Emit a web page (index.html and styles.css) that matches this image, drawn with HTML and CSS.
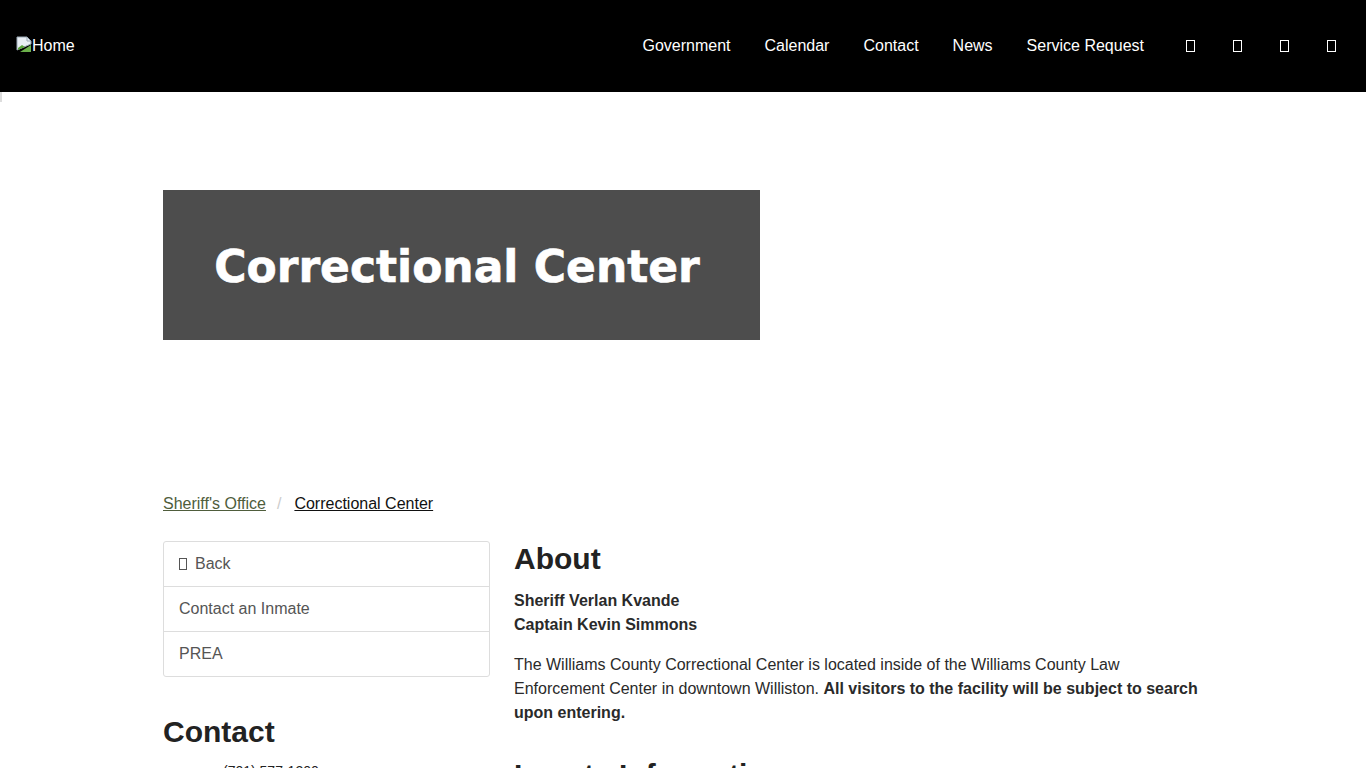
FILE: index.html
```html
<!DOCTYPE html>
<html lang="en">
<head>
    <meta charset="UTF-8">
    <meta name="viewport" content="width=device-width, initial-scale=1.0">
    <title>Correctional Center</title>
    <link rel="stylesheet" href="styles.css">
</head>
<body>
    <header class="site-header">
        <a class="brand" href="#">
            <svg class="broken-img" width="16" height="16" viewBox="0 0 16 16">
                <path d="M1 1h10l4 4v3L1 14z" fill="#e8eef4" stroke="#9aa8b4"/>
                <path d="M2 12l4-3 3 2-7 3z" fill="#5aa23c"/>
                <path d="M4 16l11-7v7z" fill="#6bb04a"/>
                <path d="M11 1v4h4" fill="none" stroke="#9aa8b4"/>
            </svg>Home
        </a>
        <nav class="main-nav">
            <a href="#">Government</a>
            <a href="#">Calendar</a>
            <a href="#">Contact</a>
            <a href="#">News</a>
            <a href="#">Service Request</a>
            <a href="#" class="icon-link first"><span class="tofu"></span></a>
            <a href="#" class="icon-link"><span class="tofu"></span></a>
            <a href="#" class="icon-link"><span class="tofu"></span></a>
            <a href="#" class="icon-link"><span class="tofu"></span></a>
        </nav>
    </header>
    <div class="stray"></div>

    <main class="container">
        <div class="banner">
            <h1>Correctional Center</h1>
        </div>

        <ol class="breadcrumb">
            <li><a href="#">Sheriff's Office</a></li>
            <li class="sep">/</li>
            <li class="current"><a href="#">Correctional Center</a></li>
        </ol>

        <div class="layout">
            <aside class="sidebar">
                <ul class="side-menu">
                    <li><a href="#"><span class="tofu dark"></span>Back</a></li>
                    <li><a href="#">Contact an Inmate</a></li>
                    <li><a href="#">PREA</a></li>
                </ul>

                <h2 class="contact-title">Contact</h2>
                <p class="phone">(701) 577-1200</p>
            </aside>

            <section class="content">
                <h2>About</h2>
                <p class="names"><strong>Sheriff Verlan Kvande<br>Captain Kevin Simmons</strong></p>
                <p>The Williams County Correctional Center is located inside of the Williams County Law Enforcement Center in downtown Williston. <strong>All visitors to the facility will be subject to search upon entering.</strong></p>
                <h2 class="next-title">Inmate Information</h2>
            </section>
        </div>
    </main>
</body>
</html>
```

FILE: styles.css
```css
body {
    margin: 0;
    font-family: 'Liberation Sans', Arial, sans-serif;
    font-size: 16px;
    color: #222;
    background-color: #ffffff;
}

a {
    color: inherit;
}

.site-header {
    height: 92px;
    background-color: #000;
    display: flex;
    align-items: center;
    justify-content: space-between;
    padding: 0 0 0 16px;
}

.brand {
    color: #fff;
    text-decoration: none;
    display: flex;
    align-items: center;
    font-size: 16px;
}

.broken-img {
    margin-top: -4px;
}

.main-nav {
    display: flex;
    align-items: center;
    padding-right: 11px;
}

.main-nav a {
    color: #fff;
    text-decoration: none;
    padding: 0 17px;
    font-size: 16px;
}

.main-nav a.icon-link {
    padding: 0 19px;
    display: flex;
}

.main-nav a.icon-link.first {
    padding-left: 25px;
}

.tofu {
    display: inline-block;
    width: 9px;
    height: 12px;
    border: 1px solid #fff;
    box-sizing: border-box;
}

.tofu.dark {
    width: 8px;
    border-color: #555;
    vertical-align: -1px;
    margin-right: 8px;
}

.stray {
    width: 2px;
    height: 10px;
    background-color: #ddd;
}

.container {
    width: 1040px;
    margin: 0 auto;
}

.banner {
    width: 597px;
    height: 150px;
    margin-top: 88px;
    background-color: #4d4d4d;
    display: flex;
    align-items: center;
    justify-content: center;
}

.banner h1 {
    margin: 0 9px 0 0;
    color: #fff;
    font-family: 'DejaVu Sans', sans-serif;
    font-weight: bold;
    font-size: 44px;
    -webkit-text-stroke: 0.6px #fff;
    padding-top: 2px;
}

.breadcrumb {
    list-style: none;
    margin: 154px 0 0;
    padding: 0;
    display: flex;
    gap: 11px;
    line-height: 20px;
}

.breadcrumb a {
    color: #4f5d3c;
}

.breadcrumb .sep {
    color: #ccc;
    padding-right: 2px;
}

.breadcrumb .current a {
    color: #111;
}

.layout {
    display: grid;
    grid-template-columns: 327px 1fr;
    gap: 24px;
    margin-top: 27px;
}

.side-menu {
    list-style: none;
    margin: 0;
    padding: 0;
    border: 1px solid #ddd;
    border-radius: 3px;
}

.side-menu li + li {
    border-top: 1px solid #ddd;
}

.side-menu a {
    display: block;
    height: 44px;
    line-height: 44px;
    padding-left: 15px;
    color: #555;
    text-decoration: none;
}

.contact-title {
    margin: 37px 0 0;
    font-size: 30px;
    line-height: 36px;
}

.phone {
    margin: 12px 0 0;
    padding-left: 60px;
    font-size: 14px;
    line-height: 18px;
}

.content h2 {
    margin: 0;
    font-size: 30px;
    line-height: 36px;
}

.content p {
    margin: 0;
    line-height: 24px;
    color: #2a2a2a;
}

.content .names {
    margin: 12px 0 16px;
}

.content .next-title {
    margin-top: 32px;
}
```
